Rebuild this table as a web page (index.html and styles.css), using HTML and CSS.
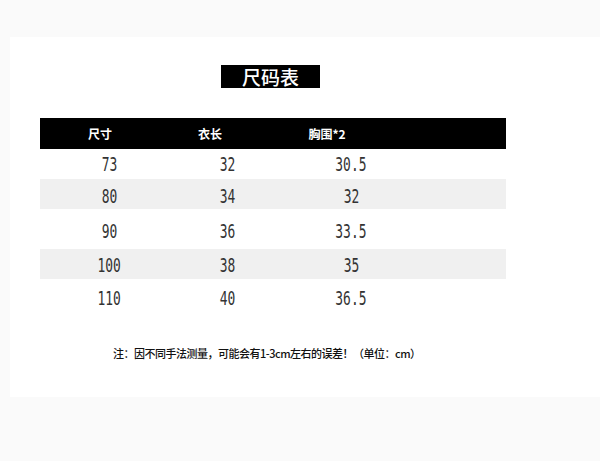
FILE: index.html
```html
<!DOCTYPE html>
<html lang="zh">
<head>
<meta charset="utf-8">
<link rel="stylesheet" href="styles.css">
</head>
<body>
<div class="panel">
  <div class="content">
    <div class="title">尺码表</div>
    <div class="table">
      <div class="head">
        <div class="hc c1">尺寸</div>
        <div class="hc c2">衣长</div>
        <div class="hc c3">胸围*2</div>
      </div>
      <div class="row r1"><span class="num c1"><i>73</i></span><span class="num c2"><i>32</i></span><span class="num c3"><i>30.5</i></span></div>
      <div class="row r2 gray"><span class="num c1"><i>80</i></span><span class="num c2"><i>34</i></span><span class="num c3"><i>32</i></span></div>
      <div class="row r3"><span class="num c1"><i>90</i></span><span class="num c2"><i>36</i></span><span class="num c3"><i>33.5</i></span></div>
      <div class="row r4 gray"><span class="num c1"><i>100</i></span><span class="num c2"><i>38</i></span><span class="num c3"><i>35</i></span></div>
      <div class="row r5"><span class="num c1"><i>110</i></span><span class="num c2"><i>40</i></span><span class="num c3"><i>36.5</i></span></div>
    </div>
    <p class="note">注：因不同手法测量，可能会有1-3cm左右的误差！（单位：cm）</p>
  </div>
</div>
</body>
</html>
```
FILE: styles.css
```css
html, body {
  margin: 0;
  padding: 0;
  background: #fafafa;
}
body {
  width: 600px;
  height: 461px;
  overflow: hidden;
  font-family: "Noto Sans CJK SC", "Liberation Sans", sans-serif;
  color: #111;
}
.panel {
  margin: 37px 0 0 10px;
  height: 360px;
  background: #fff;
}
.content {
  padding: 28px 0 0 30px;
  width: 466px;
}
.title {
  margin-left: 181px;
  width: 99px;
  height: 23px;
  background: #000;
  color: #fff;
  font-size: 19px;
  font-weight: 500;
  line-height: 23px;
  text-align: center;
}
.table {
  margin-top: 30px;
}
.head {
  display: grid;
  grid-template-columns: 120px 100px 134px 1fr;
  height: 31px;
  background: #000;
  color: #fff;
  font-size: 12px;
  font-weight: 700;
  line-height: 31px;
}
.hc {
  text-align: center;
}
.row {
  display: grid;
  grid-template-columns: 138px 98px 150px 1fr;
  align-items: center;
}
.gray {
  background: #f0f0f0;
}
.r1 { height: 30px; }
.r2 { height: 30px; padding-top: 3px; box-sizing: border-box; }
.r3 { height: 40px; padding-top: 4px; box-sizing: border-box; }
.r4 { height: 30px; padding-top: 1px; box-sizing: border-box; }
.r5 { height: 38px; }
.num {
  text-align: center;
  font-family: "DejaVu Sans Mono", "Liberation Mono", monospace;
  font-size: 19px;
  line-height: 20px;
  color: #333;
}
.num i {
  font-style: normal;
  display: inline-block;
  transform: scaleX(0.68);
  transform-origin: center;
}
.note {
  margin: 28px 0 0 73px;
  font-size: 11px;
  font-weight: 500;
  letter-spacing: -0.5px;
  line-height: 16px;
  color: #111;
  white-space: nowrap;
}
```
